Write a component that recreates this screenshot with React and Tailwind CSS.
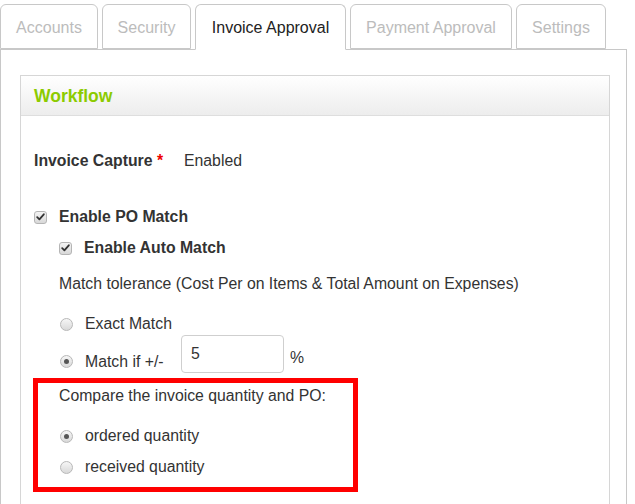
import React from "react";

const font = { fontFamily: '"Liberation Sans", Arial, sans-serif' };

function Check() {
  return (
    <span className="inline-flex h-[13px] w-[13px] shrink-0 items-center justify-center rounded-[3px] border border-[#b5b5b5] bg-gradient-to-b from-[#f4f4f4] to-[#d8d8d8]">
      <svg width="9" height="8" viewBox="0 0 9 8">
        <path d="M1.2 4.2 L3.4 6.3 L7.8 1.3" fill="none" stroke="#333" strokeWidth="1.8" strokeLinecap="round" strokeLinejoin="round" />
      </svg>
    </span>
  );
}

function Radio({ on }) {
  return (
    <span className="inline-flex h-[13px] w-[13px] shrink-0 items-center justify-center rounded-full border border-[#b8b8b8] bg-gradient-to-b from-[#f6f6f6] to-[#d9d9d9]">
      {on && <span className="h-[5px] w-[5px] rounded-full bg-[#555]" />}
    </span>
  );
}

function Tab({ label, active, w }) {
  return (
    <div
      className={
        "flex h-[45px] items-center justify-center rounded-t-[6px] border border-[#c8c8c8] pt-[2px] text-[16px] " +
        (active ? "relative z-10 -mb-px h-[46px] border-b-white bg-white text-[#222]" : "bg-white text-[#bcbcbc]")
      }
      style={{ width: w }}
    >
      {label}
    </div>
  );
}

export default function App() {
  return (
    <div className="h-[504px] w-[635px] overflow-hidden bg-white text-[15.8px] text-[#333]" style={font}>
      <div className="flex items-end gap-[4px] pt-[4px]">
        <Tab label="Accounts" w={98} />
        <Tab label="Security" w={89} />
        <Tab label="Invoice Approval" active w={151} />
        <Tab label="Payment Approval" w={162} />
        <Tab label="Settings" w={90} />
      </div>
      <div className="h-[460px] w-[627px] border border-[#c8c8c8] pl-[19px] pt-[25px]">
        <div className="h-[440px] w-[590px] border border-[#d6d6d6]">
          <div className="flex h-[40px] items-center border-b border-[#dedede] bg-gradient-to-b from-white to-[#ededed] pl-[13px] pt-[2px]">
            <span className="text-[17.5px] font-bold text-[#8ccb00]">Workflow</span>
          </div>
          <div className="pl-[13px]">
            <div className="mt-[35px] flex h-[20px] items-center">
              <span className="w-[150px] font-bold text-[#333]">
                Invoice Capture <span className="text-[#e00]">*</span>
              </span>
              <span>Enabled</span>
            </div>
            <div className="mt-[36px] flex h-[20px] items-center gap-[12px]">
              <Check />
              <span className="font-bold">Enable PO Match</span>
            </div>
            <div className="mt-[11px] flex h-[20px] items-center gap-[12px] pl-[25px]">
              <Check />
              <span className="font-bold">Enable Auto Match</span>
            </div>
            <div className="mt-[16px] flex h-[20px] items-center pl-[25px]">
              Match tolerance (Cost Per on Items &amp; Total Amount on Expenses)
            </div>
            <div className="mt-[20px] flex h-[20px] items-center gap-[12px] pl-[26px]">
              <Radio />
              <span>Exact Match</span>
            </div>
            <div className="mt-px flex h-[38px] items-center pl-[26px]">
              <div className="mt-[15px] flex w-[121px] items-center gap-[12px]">
                <Radio on />
                <span>Match if +/-</span>
              </div>
              <div className="flex h-[38px] w-[103px] items-center rounded-[4px] border border-[#cfcfcf] pl-[9px]">
                5
              </div>
              <span className="ml-[6px] mt-[7px]">%</span>
            </div>
            <div className="-ml-px mt-[5px] h-[114px] w-[325px] border-[5px] border-[#ff0000] pl-[21px] pt-[3px]">
              <div className="flex h-[20px] items-center">Compare the invoice quantity and PO:</div>
              <div className="mt-[20px] flex h-[20px] items-center gap-[12px] pl-px">
                <Radio on />
                <span>ordered quantity</span>
              </div>
              <div className="mt-[11px] flex h-[20px] items-center gap-[12px] pl-px">
                <Radio />
                <span>received quantity</span>
              </div>
            </div>
          </div>
        </div>
      </div>
    </div>
  );
}
